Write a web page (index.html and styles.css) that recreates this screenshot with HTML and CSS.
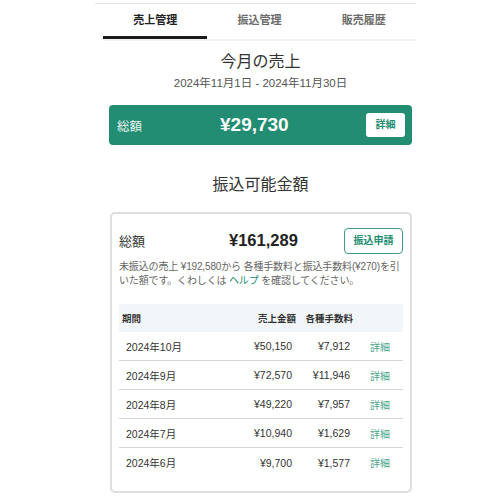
FILE: index.html
```html
<!DOCTYPE html>
<html lang="ja">
<head>
<meta charset="utf-8">
<link rel="stylesheet" href="styles.css">
</head>
<body>
<div class="page">
  <nav class="tabs">
    <div class="tab active">売上管理</div>
    <div class="tab">振込管理</div>
    <div class="tab">販売履歴</div>
  </nav>
  <section class="month">
    <h2 class="title">今月の売上</h2>
    <div class="range">2024年11月1日 - 2024年11月30日</div>
  </section>
  <div class="total-bar">
    <span class="total-label">総額</span>
    <span class="total-amount">¥29,730</span>
    <span class="total-btn">詳細</span>
  </div>
  <h2 class="title title2">振込可能金額</h2>
  <div class="card">
    <div class="card-head">
      <span class="card-label">総額</span>
      <span class="card-amount">¥161,289</span>
      <span class="card-btn">振込申請</span>
    </div>
    <p class="note">未振込の売上 ¥192,580から 各種手数料と振込手数料(¥270)を引いた額です。くわしくは <span class="link">ヘルプ</span> を確認してください。</p>
    <div class="table">
      <div class="row head">
        <span class="c-period">期間</span>
        <span class="c-sales">売上金額</span>
        <span class="c-fee">各種手数料</span>
        <span class="c-link"></span>
      </div>
      <div class="row">
        <span class="c-period">2024年10月</span>
        <span class="c-sales">¥50,150</span>
        <span class="c-fee">¥7,912</span>
        <span class="c-link">詳細</span>
      </div>
      <div class="row">
        <span class="c-period">2024年9月</span>
        <span class="c-sales">¥72,570</span>
        <span class="c-fee">¥11,946</span>
        <span class="c-link">詳細</span>
      </div>
      <div class="row">
        <span class="c-period">2024年8月</span>
        <span class="c-sales">¥49,220</span>
        <span class="c-fee">¥7,957</span>
        <span class="c-link">詳細</span>
      </div>
      <div class="row">
        <span class="c-period">2024年7月</span>
        <span class="c-sales">¥10,940</span>
        <span class="c-fee">¥1,629</span>
        <span class="c-link">詳細</span>
      </div>
      <div class="row last">
        <span class="c-period">2024年6月</span>
        <span class="c-sales">¥9,700</span>
        <span class="c-fee">¥1,577</span>
        <span class="c-link">詳細</span>
      </div>
    </div>
  </div>
</div>
</body>
</html>
```
FILE: styles.css
```css
* { box-sizing: border-box; }
html, body { margin: 0; padding: 0; background: #fff; }
body {
  font-family: "Liberation Sans", "Noto Sans CJK JP", sans-serif;
  color: #222;
}
.page {
  margin: 3px 0 0 95px;
  width: 321px;
  border-top: 1px solid #e4e4e4;
}
.tabs {
  display: flex;
  margin-left: 8px;
  height: 37px;
  border-bottom: 2px solid #f3f3f3;
}
.tab {
  flex: 1;
  text-align: center;
  font-size: 11px;
  font-weight: 700;
  color: #6b6b6b;
  line-height: 32px;
}
.tab.active {
  color: #222;
  border-bottom: 3px solid #1c1c1c;
}
.month { text-align: center; margin-top: 10px; }
.title {
  margin: 0;
  font-size: 16px;
  font-weight: 400;
  line-height: 22px;
  text-align: center;
  color: #333;
  padding-left: 10px;
}
.range {
  font-size: 11.5px;
  color: #555;
  line-height: 16px;
  margin-top: 2px;
  padding-left: 10px;
}
.total-bar {
  margin: 14px 4px 0 14px;
  height: 40px;
  background: #228d72;
  border-radius: 4px;
  display: flex;
  align-items: center;
  padding: 0 7px 0 8px;
  color: #fff;
}
.total-label { font-size: 12.5px; color: #e8f3ef; width: 103px; }
.total-amount { font-size: 19px; font-weight: 700; flex: 1; }
.total-btn {
  background: #fff;
  color: #228d72;
  font-size: 10px;
  font-weight: 700;
  width: 39px;
  height: 24px;
  line-height: 24px;
  text-align: center;
  border-radius: 3px;
}
.title2 { margin-top: 29px; }
.card {
  margin: 16px 4px 0 15px;
  height: 281px;
  border: 2px solid #dedede;
  border-radius: 5px;
  padding: 13px 7px 0 7px;
}
.card-head {
  display: flex;
  align-items: center;
  height: 27px;
}
.card-label { font-size: 13px; color: #333; width: 110px; }
.card-amount { font-size: 16.5px; font-weight: 700; flex: 1; color: #222; }
.card-btn {
  width: 59px;
  height: 26px;
  border: 1.5px solid #3f9b82;
  border-radius: 4px;
  color: #228d72;
  font-size: 10px;
  font-weight: 700;
  text-align: center;
  line-height: 23px;
}
.note {
  margin: 6px -3px 0 0;
  font-size: 10px;
  line-height: 14px;
  letter-spacing: -0.15px;
  color: #666;
}
.link { color: #228d72; }
.table { margin-top: 16px; }
.row {
  display: flex;
  align-items: center;
  height: 29px;
  border-bottom: 1px solid #d7d7d7;
  font-size: 10.5px;
  color: #333;
}
.row.last { border-bottom: none; }
.row.head {
  height: 28px;
  background: #f3f6f9;
  border-bottom: none;
  font-size: 9.5px;
  font-weight: 700;
  color: #333;
}
.c-period { width: 109px; padding-left: 7px; }
.c-sales { width: 64px; text-align: right; }
.c-fee { width: 58px; text-align: right; }
.c-link { flex: 1; padding-left: 20px; color: #4aa68b; font-size: 10px; }
.row.head .c-period { width: 111px; padding-left: 3px; }
.row.head .c-sales { width: 66px; }
.row.head .c-fee { width: 57px; }
```
